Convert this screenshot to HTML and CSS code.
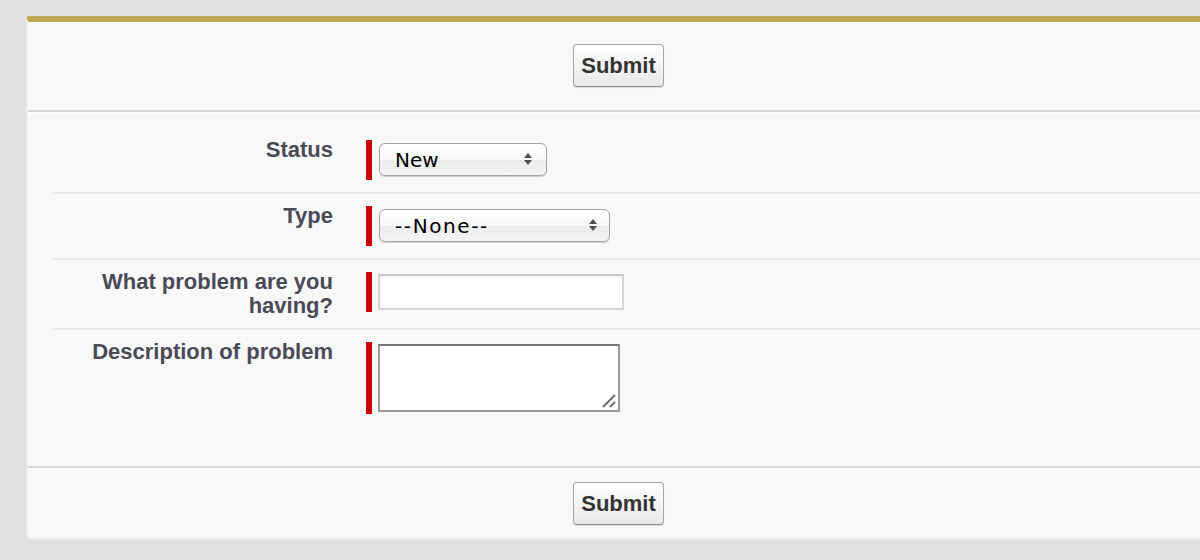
FILE: index.html
```html
<!DOCTYPE html>
<html lang="en">
<head>
<meta charset="utf-8">
<title>Case form</title>
<link rel="stylesheet" href="styles.css">
</head>
<body>
<div class="page">
  <form class="panel">
    <div class="bar-top">
      <button type="button" class="btn">Submit</button>
    </div>
    <div class="section">
      <div class="row">
        <label class="label">Status</label>
        <div class="field">
          <span class="req"></span>
          <div class="select-wrap select-status">
            <select class="select"><option>New</option></select>
            <svg class="arrows" viewBox="0 0 8 12" width="8" height="12"><path d="M0 5 L4 0 L8 5 Z M0 7 L8 7 L4 12 Z" fill="#4f4f4f"/></svg>
          </div>
        </div>
      </div>
      <div class="row">
        <label class="label">Type</label>
        <div class="field">
          <span class="req"></span>
          <div class="select-wrap select-type">
            <select class="select select-wide"><option>--None--</option></select>
            <svg class="arrows" viewBox="0 0 8 12" width="8" height="12"><path d="M0 5 L4 0 L8 5 Z M0 7 L8 7 L4 12 Z" fill="#4f4f4f"/></svg>
          </div>
        </div>
      </div>
      <div class="row">
        <label class="label">What problem are you having?</label>
        <div class="field">
          <span class="req"></span>
          <input type="text" class="input">
        </div>
      </div>
      <div class="row row-last">
        <label class="label">Description of problem</label>
        <div class="field">
          <span class="req"></span>
          <div class="textarea-wrap">
            <textarea class="textarea"></textarea>
            <svg class="grip" viewBox="0 0 14 14" width="14" height="14"><path d="M1 13 L13 1 M8 13 L13 8" stroke="#6e6e6e" stroke-width="2" fill="none"/></svg>
          </div>
        </div>
      </div>
    </div>
    <div class="bar-bottom">
      <button type="button" class="btn">Submit</button>
    </div>
  </form>
</div>
</body>
</html>
```
FILE: styles.css
```css
html, body {
  margin: 0;
  padding: 0;
  background: #e1e1e1;
  overflow: hidden;
  font-family: "Liberation Sans", Arial, sans-serif;
}

.page {
  padding: 16px 0 0 26px;
  height: 560px;
  box-sizing: border-box;
}

.panel {
  width: 1220px;
  background: #f8f8f8;
  border-top: 6px solid #bba754;
  border-left: 2px solid #ebebeb;
  border-bottom: 2px solid #ebebeb;
  border-radius: 4px 0 0 6px;
}

.bar-top {
  display: flex;
  justify-content: center;
  padding: 22px 39px 23px 0;
  border-bottom: 2px solid #d7d7d7;
}

.bar-bottom {
  display: flex;
  justify-content: center;
  padding: 14px 39px 13px 0;
  border-top: 2px solid #d7d7d7;
  box-shadow: inset 0 2px 0 #ffffff;
}

.btn {
  width: 91px;
  height: 43px;
  box-sizing: border-box;
  border: 1px solid #a6a6a6;
  border-bottom-color: #8f8f8f;
  border-radius: 4px;
  background: linear-gradient(#ffffff, #e8e8e8);
  box-shadow: 0 1px 1px rgba(0, 0, 0, 0.12);
  font-family: "Liberation Sans", Arial, sans-serif;
  font-weight: bold;
  font-size: 22px;
  color: #333333;
  padding: 0;
  line-height: 1;
}

.section {
  padding: 16px 0 40px;
  box-shadow: inset 0 2px 0 #ffffff;
}

.row {
  display: flex;
  align-items: flex-start;
  margin-left: 24px;
  padding: 12px 0;
  border-bottom: 2px solid #e8e8e8;
}

.row-last {
  border-bottom: none;
}

.label {
  width: 281px;
  flex: none;
  text-align: right;
  font-weight: bold;
  font-size: 22px;
  line-height: 24px;
  color: #4a4a56;
  margin: -2px 33px -2px 0;
}

.field {
  display: flex;
  align-items: flex-start;
}

.req {
  width: 6px;
  min-height: 40px;
  align-self: stretch;
  background: #cc0000;
  margin-right: 6px;
  flex: none;
}

.select-wrap {
  position: relative;
  margin: 3px 0 0 1px;
}

.select {
  appearance: none;
  -webkit-appearance: none;
  display: block;
  width: 168px;
  height: 33px;
  box-sizing: border-box;
  border: 1px solid #a3a3a3;
  border-radius: 6px;
  background: linear-gradient(#ffffff 0%, #f7f7f7 50%, #ececec 51%, #f3f3f3 100%);
  box-shadow: 0 1px 1px rgba(0, 0, 0, 0.18);
  font-family: "DejaVu Sans", Verdana, sans-serif;
  font-size: 20px;
  color: #000000;
  padding: 0 0 0 15px;
  margin: 0;
}

.select-wide {
  width: 231px;
  letter-spacing: 1.6px;
}

.arrows {
  position: absolute;
  top: 10px;
  right: 15px;
  pointer-events: none;
}

.select-type .arrows {
  right: 13px;
}

.input {
  display: block;
  width: 246px;
  height: 36px;
  box-sizing: border-box;
  margin: 2px 0 0 0;
  border: 2px solid #d6d6d6;
  border-top-color: #c8c8c8;
  background: #ffffff;
  box-shadow: inset 1px 1px 2px rgba(0, 0, 0, 0.06);
  padding: 0 6px;
}

.textarea-wrap {
  position: relative;
  margin: 2px 0;
}

.textarea {
  display: block;
  width: 242px;
  height: 68px;
  box-sizing: border-box;
  margin: 0;
  border: 2px solid #999999;
  border-top-color: #767676;
  background: #ffffff;
  padding: 2px;
  resize: none;
}

.grip {
  position: absolute;
  right: 4px;
  bottom: 4px;
  pointer-events: none;
}
```
